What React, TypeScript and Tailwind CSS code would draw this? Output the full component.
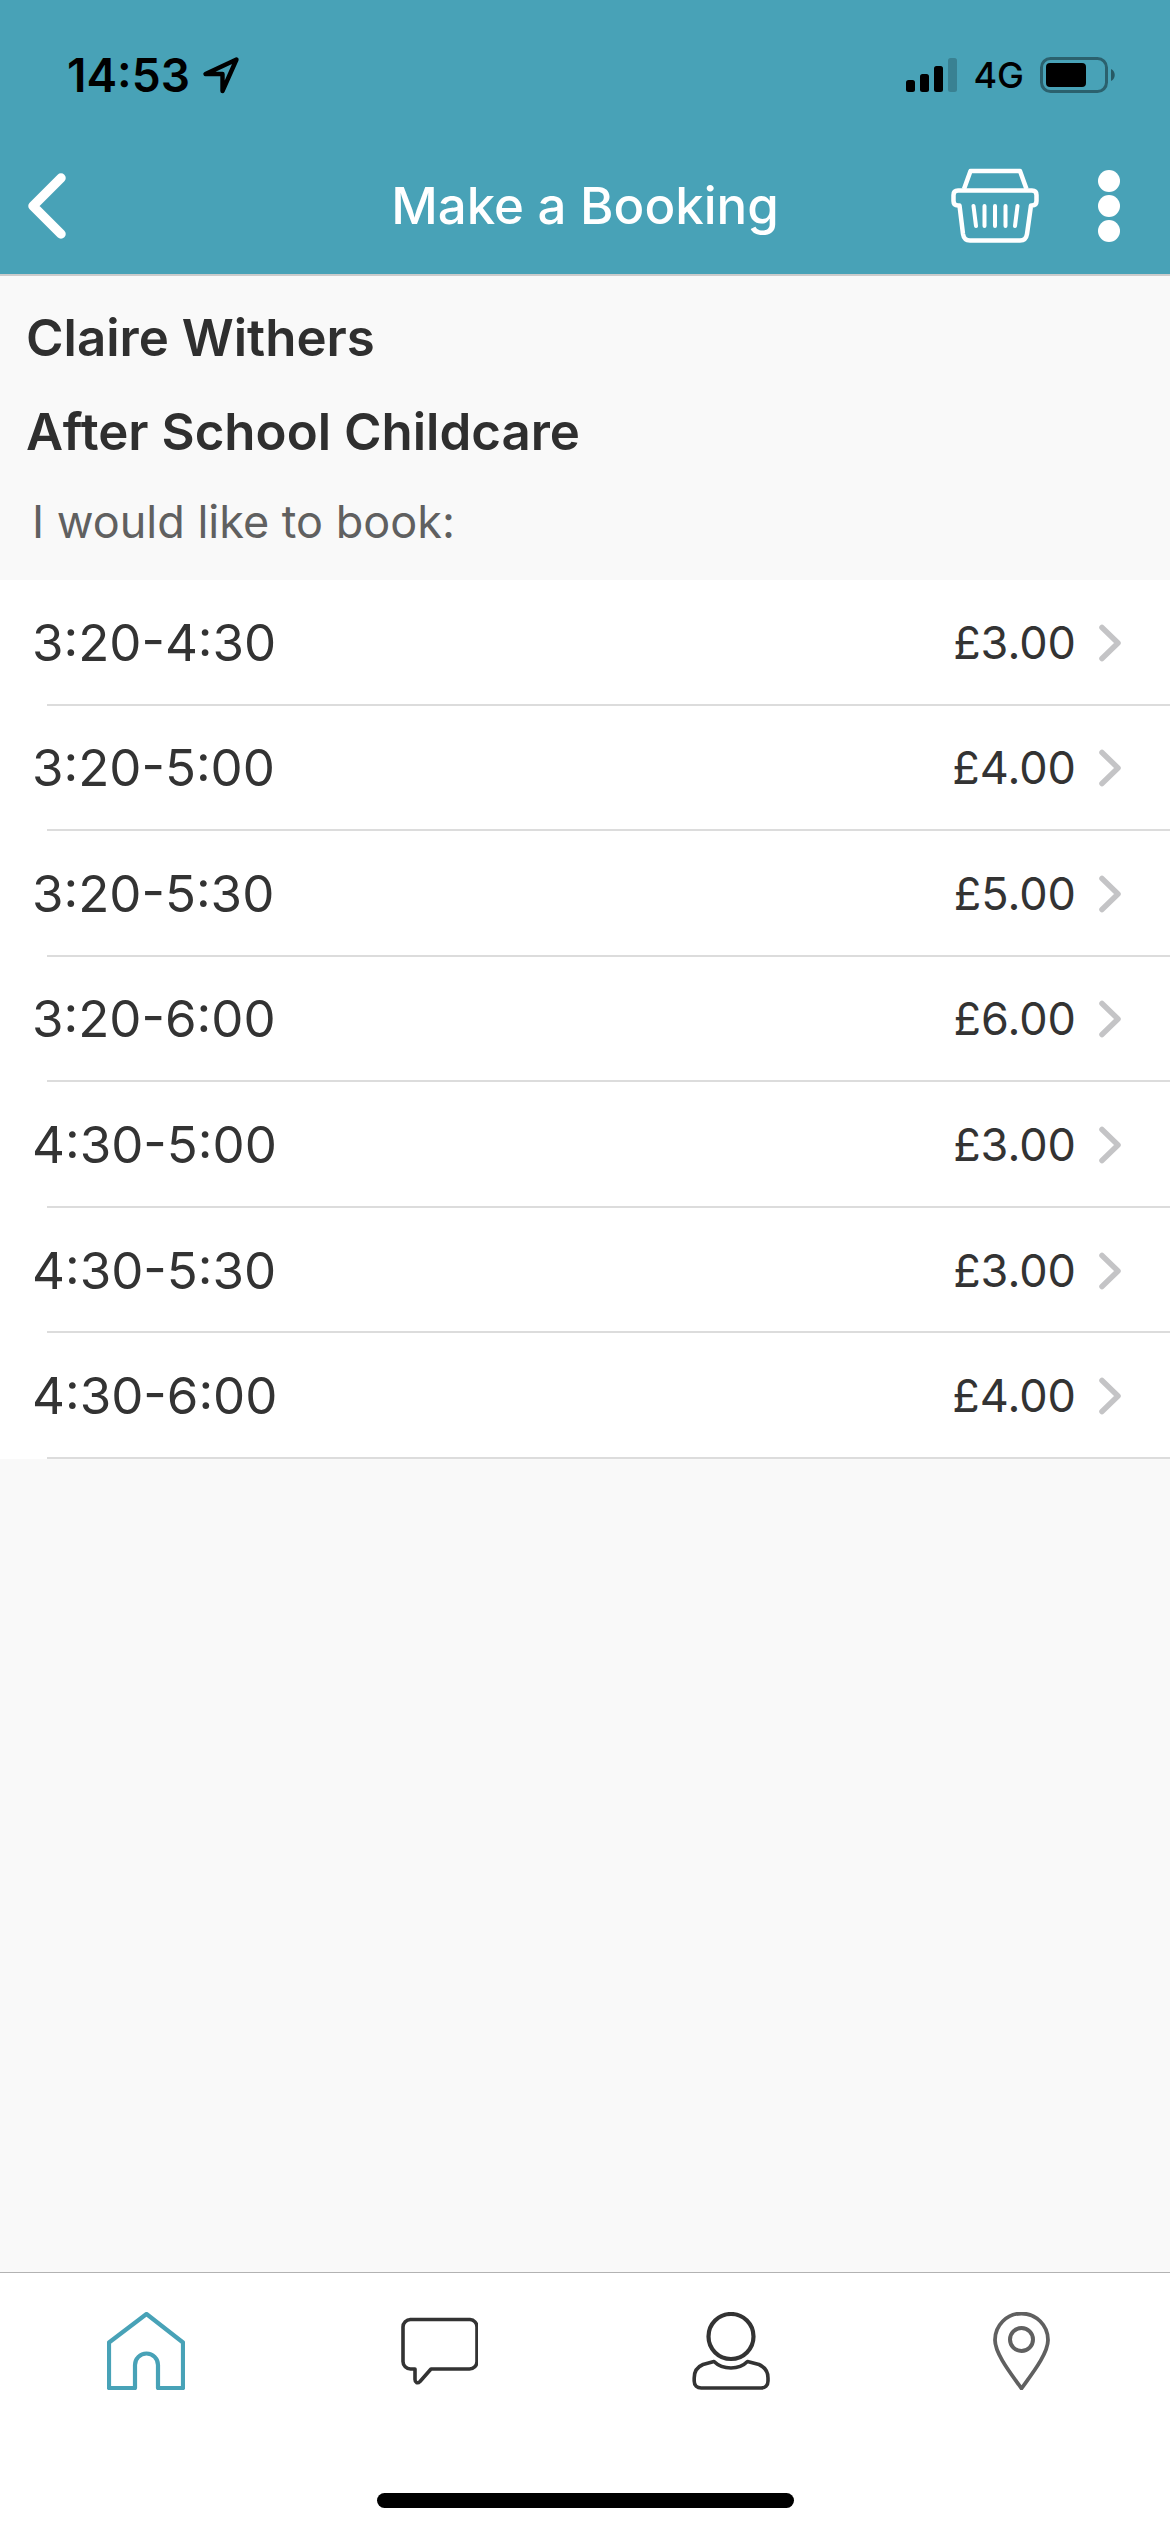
import { useState } from "react";
import type { ReactNode } from "react";

type Session = { time: string; price: string };

const SESSIONS: Session[] = [
  { time: "3:20-4:30", price: "£3.00" },
  { time: "3:20-5:00", price: "£4.00" },
  { time: "3:20-5:30", price: "£5.00" },
  { time: "3:20-6:00", price: "£6.00" },
  { time: "4:30-5:00", price: "£3.00" },
  { time: "4:30-5:30", price: "£3.00" },
  { time: "4:30-6:00", price: "£4.00" },
];

type TabName = "Home" | "Messages" | "Profile" | "Location";

const TABS: { name: TabName; idle: string; icon: ReactNode }[] = [
  {
    name: "Home",
    idle: "text-[#333333]",
    icon: <path d="M2 30.5 39.5 2 76 30.5V76H51V53a11.5 11.5 0 0 0-23 0V76H2Z" strokeWidth="4.200" />,
  },
  {
    name: "Messages",
    idle: "text-[#333333]",
    icon: <path d="M10 7.500H70a7.500 7.500 0 0 1 7 7.500V49.500a7.500 7.500 0 0 1-7.500 7.500H31L20 69.500c-2.500 2.500-5 1-5-2V57H10.500a7.500 7.500 0 0 1-7.500-7.500V15a7.500 7.500 0 0 1 7.500-7.500Z" strokeWidth="3.600" />,
  },
  {
    name: "Profile",
    idle: "text-[#333333]",
    icon: (
      <>
        <circle cx="39" cy="24.500" r="22.500" strokeWidth="4.200" />
        <path d="M22 49.500 11 52.500C5 55 2.200 60 2.200 66v3c0 4.500 3 7 7 7H69c4 0 7-2.500 7-7v-3c0-6-3.500-11-9-13.500L55.500 49.500C51 54 46 56 39 56s-12.500-2-17-6.500Z" strokeWidth="3.600" />
      </>
    ),
  },
  {
    name: "Location",
    idle: "text-[#606060]",
    icon: (
      <>
        <path d="M36.500 76.500C27 63 10 42 10 28a26.500 26.500 0 0 1 53 0c0 14-17 35-26.500 48.500Z" strokeWidth="3.800" />
        <circle cx="36.500" cy="27.500" r="11.500" strokeWidth="4" />
      </>
    ),
  },
];

function StatusBar() {
  return (
    <div className="flex h-[141px] items-start justify-between pt-[47px] pr-[55px] pl-[67px] text-black">
      <div className="flex h-14 items-center gap-3">
        <span className="text-[46px] leading-14 font-semibold">14:53</span>
        <svg width="38" height="38" viewBox="0 0 38 38" fill="none" stroke="currentColor" strokeWidth="4.400" strokeLinejoin="round" aria-hidden="true">
          <path d="M34.500 3.500 3.500 18H20.500V35Z" />
        </svg>
      </div>
      <div className="flex h-14 items-center gap-4">
        <svg width="51" height="34" viewBox="0 0 51 34" fill="currentColor" aria-hidden="true">
          <rect x="0" y="22" width="9" height="12" rx="2.500" />
          <rect x="14" y="16" width="9" height="18" rx="2.500" />
          <rect x="28" y="8" width="9" height="26" rx="2.500" />
          <rect x="42" y="0" width="9" height="34" rx="2.500" opacity="0.2" />
        </svg>
        <span className="text-[36px] leading-14 font-medium">4G</span>
        <svg width="75" height="36" viewBox="0 0 75 36" fill="currentColor" aria-hidden="true">
          <rect x="1.500" y="1.500" width="65" height="33" rx="9" fill="none" stroke="currentColor" strokeWidth="3" opacity="0.4" />
          <rect x="6" y="6" width="40" height="24" rx="4" />
          <path d="M71 12c5 2 5 10 0 12Z" opacity="0.45" />
        </svg>
      </div>
    </div>
  );
}

function NavBar() {
  return (
    <div className="grid h-[133px] grid-cols-[1fr_auto_1fr] items-center px-[26px] pb-1 text-white">
      <button aria-label="Back" className="justify-self-start">
        <svg width="42" height="68" viewBox="0 0 42 68" fill="none" stroke="currentColor" strokeWidth="9.500" strokeLinecap="round" strokeLinejoin="round">
          <path d="M35 6 7 34 35 62" />
        </svg>
      </button>
      <h1 className="text-[51px] leading-16 font-medium">Make a Booking</h1>
      <div className="flex items-center gap-[59px] justify-self-end pr-6">
        <button aria-label="Basket">
          <svg width="88" height="75" viewBox="0 0 88 75" fill="none" stroke="currentColor" strokeWidth="4.500" strokeLinejoin="round">
            <path d="M13 21 19.500 3H69L75.500 21" />
            <path d="M7 22.500H81q4.500 0 4.500 4.500V33q0 4.500-4.500 4.500H80L76 66q-1 6.500-7 6.500H19q-6 0-7-6.500L8.500 37.500H7Q2.500 37.500 2.500 33V27q0-4.500 4.500-4.500Z" />
            <path d="M22.500 38 25 58M33.500 38V58M44 38V58M54.500 38V58M66.500 38 64 58" strokeLinecap="round" strokeWidth="4" />
          </svg>
        </button>
        <button aria-label="More options">
          <svg width="22" height="72" viewBox="0 0 22 72" fill="currentColor">
            <circle cx="11" cy="11" r="11" />
            <circle cx="11" cy="36" r="11" />
            <circle cx="11" cy="61" r="11" />
          </svg>
        </button>
      </div>
    </div>
  );
}

function SessionRow({ session }: { session: Session }) {
  return (
    <li className="flex bg-white">
      <button className="relative flex flex-1 items-center justify-between pr-12 pl-8 text-left text-[#333333]">
        <span className="text-[51px] leading-16">{session.time}</span>
        <span className="flex items-center gap-[22px]">
          <span className="text-[45px] leading-16">{session.price}</span>
          <svg width="24" height="38" viewBox="0 0 24 38" fill="none" stroke="#c4c4c6" strokeWidth="5.500" strokeLinecap="round" strokeLinejoin="round" aria-hidden="true">
            <path d="M4 3.500 20 19 4 34.500" />
          </svg>
        </span>
        <span className="absolute right-0 bottom-0 left-[47px] border-b-2 border-[#dcdcdc]" />
      </button>
    </li>
  );
}

function TabBar() {
  const [active, setActive] = useState<TabName>("Home");
  return (
    <footer className="border-t border-[#b2b2b2] bg-white">
      <nav className="grid grid-cols-4 pt-[39px] pb-[103px]">
        {TABS.map((tab) => (
          <button
            key={tab.name}
            aria-label={tab.name}
            onClick={() => setActive(tab.name)}
            className={`flex justify-center ${tab.name === active ? "text-[#48a2b7]" : tab.idle}`}
          >
            <svg width="78" height="78" viewBox="0 0 78 78" fill="none" stroke="currentColor" strokeLinejoin="round">
              {tab.icon}
            </svg>
          </button>
        ))}
      </nav>
      <div className="mx-auto mb-6 h-[15px] w-[417px] rounded-full bg-black" />
    </footer>
  );
}

export default function App() {
  return (
    <div className="flex min-h-screen flex-col bg-[#f9f9f9] font-[Inter,sans-serif]">
      <header className="border-b-2 border-[#cccccc] bg-[#48a2b7]">
        <StatusBar />
        <NavBar />
      </header>
      <main className="flex-1">
        <div className="px-[26px] pt-[15px] pb-4">
          <h2 className="text-[51px] leading-[94px] font-semibold text-[#2f2f2f]">Claire Withers</h2>
          <h2 className="text-[51px] leading-[94px] font-semibold text-[#2f2f2f]">After School Childcare</h2>
          <p className="pl-1.5 text-[45px] leading-[85px] text-[#606060]">I would like to book:</p>
        </div>
        <ul className="grid min-h-[879px] auto-rows-fr">
          {SESSIONS.map((session) => (
            <SessionRow key={session.time} session={session} />
          ))}
        </ul>
      </main>
      <TabBar />
    </div>
  );
}
